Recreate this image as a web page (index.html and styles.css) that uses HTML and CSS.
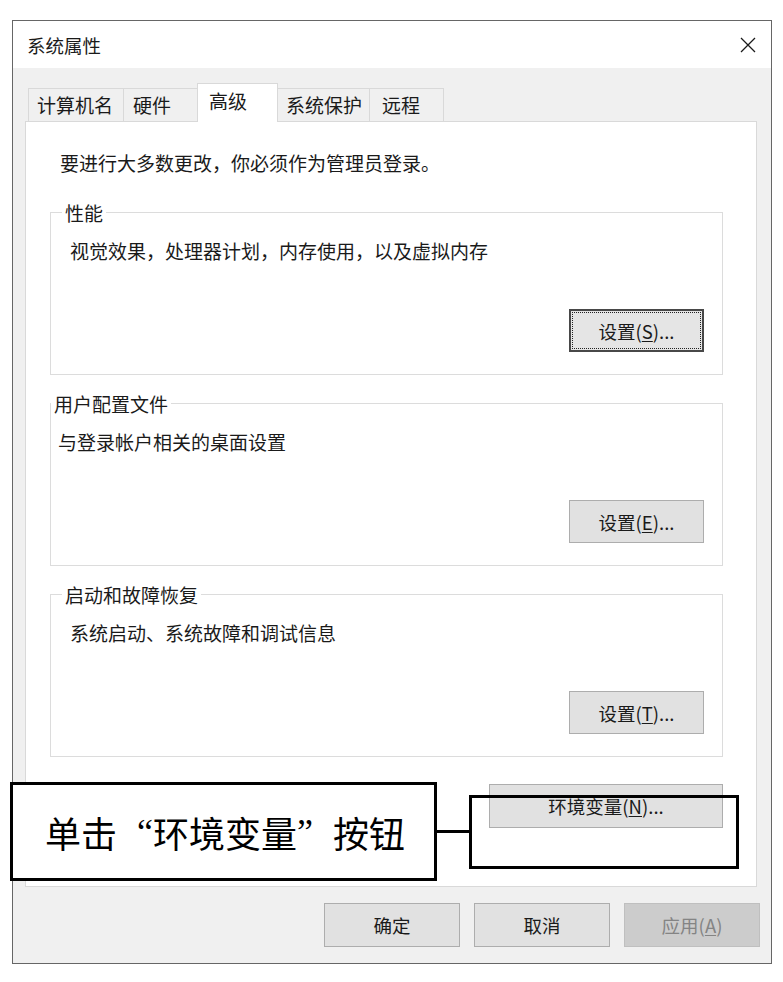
FILE: index.html
```html
<!DOCTYPE html>
<html lang="zh-CN">
<head>
<meta charset="utf-8">
<title>系统属性</title>
<link rel="stylesheet" href="styles.css">
</head>
<body>
<div class="window">
  <div class="titlebar">
    <span class="title">系统属性</span>
    <svg class="close" width="16" height="16" viewBox="0 0 16 16"><path d="M1 1 L15 15 M15 1 L1 15" stroke="#1a1a1a" stroke-width="1.3" fill="none"/></svg>
  </div>
  <div class="client">
    <div class="tabs">
      <div class="tab t1">计算机名</div>
      <div class="tab t2">硬件</div>
      <div class="tab t3 active">高级</div>
      <div class="tab t4">系统保护</div>
      <div class="tab t5">远程</div>
    </div>
    <div class="panel">
      <p class="intro">要进行大多数更改，你必须作为管理员登录。</p>
      <div class="group g1">
        <span class="legend">性能</span>
        <p class="desc">视觉效果，处理器计划，内存使用，以及虚拟内存</p>
        <button class="btn focus">设置(<u>S</u>)...</button>
      </div>
      <div class="group g2">
        <span class="legend">用户配置文件</span>
        <p class="desc">与登录帐户相关的桌面设置</p>
        <button class="btn">设置(<u>E</u>)...</button>
      </div>
      <div class="group g3">
        <span class="legend">启动和故障恢复</span>
        <p class="desc">系统启动、系统故障和调试信息</p>
        <button class="btn">设置(<u>T</u>)...</button>
      </div>
      <div class="envrow">
        <button class="btn env">环境变量(<u>N</u>)...</button>
      </div>
    </div>
    <div class="footer">
      <button class="btn fbtn">确定</button>
      <button class="btn fbtn">取消</button>
      <button class="btn fbtn disabled">应用(<u>A</u>)</button>
    </div>
  </div>
</div>
<div class="callout">单击<span class="q q-open">“</span>环境变量<span class="q q-close">”</span>按钮</div>
<div class="connector"></div>
<div class="highlight"></div>
</body>
</html>
```
FILE: styles.css
```css
html, body {
  margin: 0;
  padding: 0;
  background: #ffffff;
}
body {
  font-family: "Noto Sans CJK SC", "Microsoft YaHei", sans-serif;
  font-size: 19px;
  color: #1a1a1a;
  width: 783px;
  height: 982px;
  overflow: hidden;
  position: relative;
}
.window {
  box-sizing: border-box;
  margin: 20px 0 0 12px;
  width: 760px;
  height: 944px;
  border: 1px solid #666666;
  background: #f0f0f0;
  display: flex;
  flex-direction: column;
}
.titlebar {
  height: 47px;
  background: #ffffff;
  display: flex;
  align-items: center;
  justify-content: space-between;
  padding: 0 15px 0 14px;
  flex: none;
}
.title {
  line-height: 24px;
  font-size: 18.5px;
}
.client {
  flex: 1;
  padding: 15px 14px 0 12px;
  display: flex;
  flex-direction: column;
}
.tabs {
  display: flex;
  align-items: flex-end;
  height: 38px;
  padding-left: 3px;
}
.tab {
  box-sizing: border-box;
  height: 33px;
  border: 1px solid #d9d9d9;
  border-bottom: none;
  background: #f0f0f0;
  margin-right: -1px;
  display: flex;
  align-items: center;
  padding-left: 8px;
  line-height: 24px;
  white-space: nowrap;
}
.t1 { width: 96px; }
.t2 { width: 75px; padding-left: 9px; }
.t3 { width: 81px; }
.t4 { width: 93px; padding-left: 8px; }
.t5 { width: 75px; padding-left: 12px; }
.tab.active {
  height: 39px;
  margin-bottom: -1px;
  background: #ffffff;
  position: relative;
  z-index: 1;
  padding-left: 11px;
  padding-bottom: 4px;
}
.panel {
  box-sizing: border-box;
  height: 766px;
  width: 732px;
  background: #ffffff;
  border: 1px solid #d9d9d9;
  padding: 29px 0 0 24px;
  display: flex;
  flex-direction: column;
}
.intro {
  margin: 0 0 0 10px;
  line-height: 24px;
}
.group {
  box-sizing: border-box;
  width: 673px;
  height: 163px;
  border: 1px solid #dcdcdc;
  display: flex;
  flex-direction: column;
  margin-top: 28px;
}
.g1 { margin-top: 37px; }
.legend {
  align-self: flex-start;
  margin: -12px 0 0 11px;
  padding: 0 3px;
  background: #ffffff;
  line-height: 24px;
}
.g2 .legend { margin-left: 0; }
.desc {
  margin: 14px 0 0 19px;
  line-height: 24px;
}
.g2 .desc { margin-left: 7px; }
.btn {
  box-sizing: border-box;
  font-family: inherit;
  font-size: 18.5px;
  color: #1a1a1a;
  background: #e1e1e1;
  border: 1px solid #adadad;
  padding: 0;
  line-height: 24px;
}
.btn u {
  text-decoration-thickness: 1px;
  text-underline-offset: 2px;
}
.group .btn {
  width: 135px;
  height: 43px;
  margin: auto 18px 22px 0;
  align-self: flex-end;
}
.btn.focus {
  border: 2px solid #484848;
  outline: 1px dotted #222222;
  outline-offset: -4px;
  background: #e5e5e5;
}
.envrow {
  width: 673px;
  display: flex;
  justify-content: flex-end;
  margin-top: 27px;
}
.btn.env {
  width: 234px;
  height: 44px;
}
.footer {
  display: flex;
  justify-content: flex-end;
  gap: 14px;
  margin: 16px -3px 0 0;
}
.fbtn {
  width: 136px;
  height: 44px;
}
.btn.disabled {
  background: #cccccc;
  border-color: #bfbfbf;
  color: #848484;
}
.callout {
  position: absolute;
  left: 10px;
  top: 782px;
  box-sizing: border-box;
  width: 427px;
  height: 99px;
  border: 3px solid #000000;
  background: #ffffff;
  font-family: "Liberation Serif", "Noto Sans CJK SC", serif;
  font-size: 36px;
  color: #000000;
  display: flex;
  align-items: center;
  padding-left: 32px;
  white-space: nowrap;
}
.q {
  display: inline-block;
  width: 36px;
}
.q-open { text-align: right; }
.q-close { text-align: left; }
.connector {
  position: absolute;
  left: 437px;
  top: 830px;
  width: 33px;
  height: 3px;
  background: #000000;
}
.highlight {
  position: absolute;
  left: 469px;
  top: 795px;
  box-sizing: border-box;
  width: 270px;
  height: 74px;
  border: 3px solid #000000;
}
```
